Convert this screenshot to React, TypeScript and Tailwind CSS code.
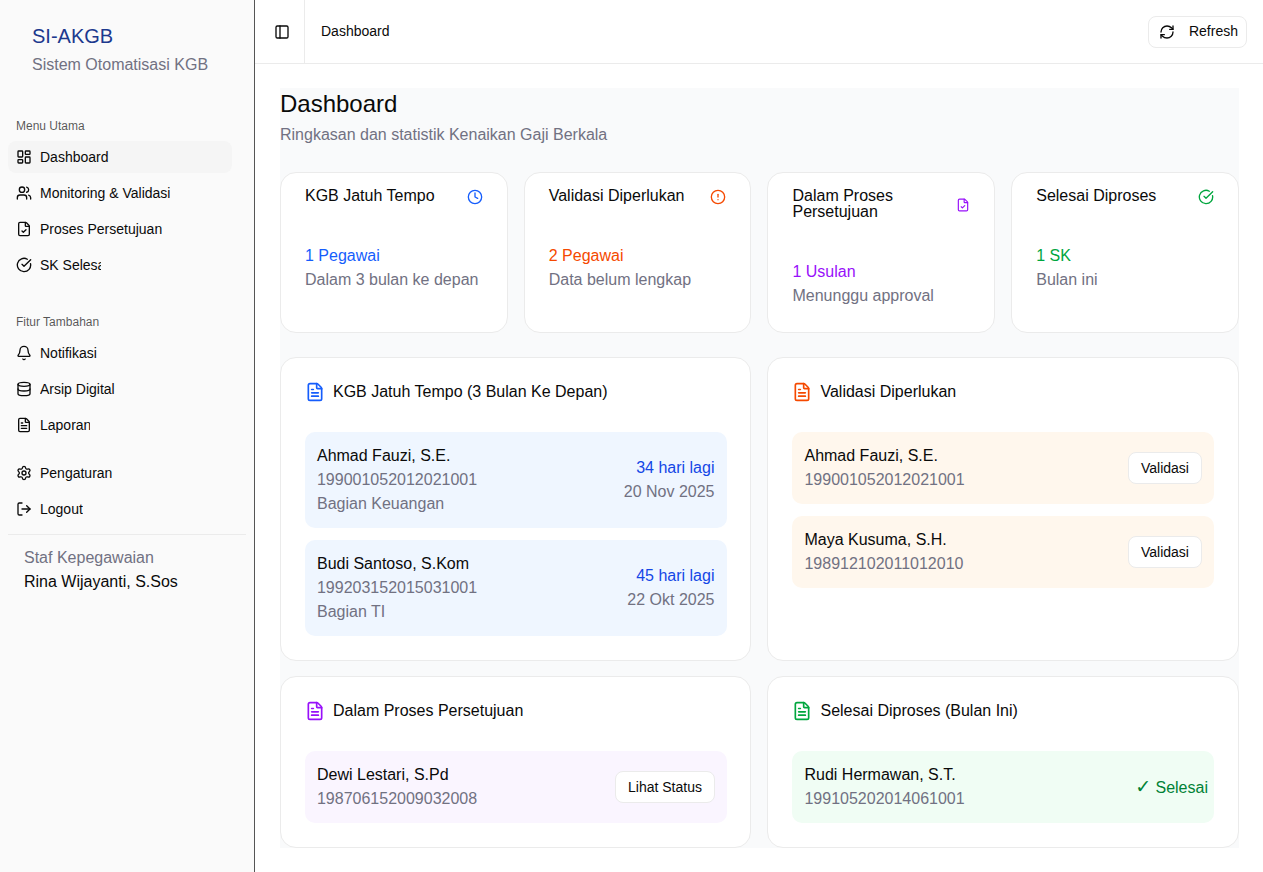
import {
  AlertCircle,
  Bell,
  CircleCheckBig,
  Clock,
  Database,
  FileCheck,
  FileText,
  LayoutDashboard,
  LogOut,
  PanelLeft,
  RefreshCw,
  Settings,
  Users,
  type LucideIcon,
} from "lucide-react";
import type { ReactNode } from "react";

function NavItem({
  icon: Icon,
  label,
  active,
  clip,
}: {
  icon: LucideIcon;
  label: string;
  active?: boolean;
  clip?: string;
}) {
  return (
    <div
      className={`flex h-8 items-center gap-2 rounded-lg px-2 text-sm text-[#0a0a0a] ${active ? "bg-[#f5f5f5]" : ""}`}
    >
      <Icon className="size-4 shrink-0" />
      <span className={`overflow-hidden whitespace-nowrap ${clip ?? ""}`}>{label}</span>
    </div>
  );
}

function StatCard({
  title,
  icon: Icon,
  iconColor,
  iconSize = "size-4",
  value,
  valueColor,
  note,
}: {
  title: string;
  icon: LucideIcon;
  iconColor: string;
  iconSize?: string;
  value: string;
  valueColor: string;
  note: string;
}) {
  return (
    <div className="rounded-2xl border border-[#ebebeb] bg-white px-6 pt-[15px] pb-6">
      <div className="flex items-center justify-between gap-2">
        <h3 className="leading-4 text-[#0a0a0a]">{title}</h3>
        <Icon className={`shrink-0 translate-y-px ${iconSize} ${iconColor}`} />
      </div>
      <div className={`mt-10 ${valueColor}`}>{value}</div>
      <div className="text-[#717182]">{note}</div>
    </div>
  );
}

function Panel({
  title,
  iconColor,
  left,
  children,
}: {
  title: string;
  iconColor: string;
  left?: boolean;
  children: ReactNode;
}) {
  return (
    <div
      className={`rounded-2xl border border-[#ebebeb] bg-white pt-6 pb-6 pl-6 ${left ? "pr-[23.5px]" : "pr-6"}`}
    >
      <div className="flex h-5 items-center gap-2">
        <FileText className={`size-5 shrink-0 ${iconColor}`} />
        <h3 className="leading-4 text-[#0a0a0a]">{title}</h3>
      </div>
      <div className="mt-[30px] flex flex-col gap-3">{children}</div>
    </div>
  );
}

function PersonRow({
  name,
  nip,
  dept,
  bg,
  right,
}: {
  name: string;
  nip: string;
  dept?: string;
  bg: string;
  right: ReactNode;
}) {
  return (
    <div className={`flex items-center justify-between rounded-[10px] p-3 ${bg}`}>
      <div>
        <div className="text-[#0a0a0a]">{name}</div>
        <div className="text-[#717182]">{nip}</div>
        {dept && <div className="text-[#717182]">{dept}</div>}
      </div>
      {right}
    </div>
  );
}

function SmallButton({ label }: { label: string }) {
  return (
    <button className="h-8 rounded-lg border border-[#ebebeb] bg-white px-3 text-sm text-[#0a0a0a]">
      {label}
    </button>
  );
}

function DueDate({ days, date }: { days: string; date: string }) {
  return (
    <div className="pr-[0.5px] text-right">
      <div className="text-[#1447e6]">{days}</div>
      <div className="text-[#717182]">{date}</div>
    </div>
  );
}

export default function App() {
  return (
    <div className="flex h-[872px] overflow-hidden bg-white font-['Liberation_Sans',sans-serif]">
      <aside className="flex w-[255px] shrink-0 flex-col border-r border-[#555555] bg-[#fafafa]">
        <div className="px-8 pt-[22px]">
          <div className="text-xl leading-7 text-[#1c398e]">SI-AKGB</div>
          <div className="mt-[3px] text-[#717182]">Sistem Otomatisasi KGB</div>
        </div>

        <div className="mt-[32px] px-2">
          <div className="flex h-8 items-center px-2 pt-px text-xs text-[#0a0a0a]/70">Menu Utama</div>
          <div className="flex w-[224px] flex-col gap-1">
            <NavItem icon={LayoutDashboard} label="Dashboard" active />
            <NavItem icon={Users} label="Monitoring & Validasi" />
            <NavItem icon={FileCheck} label="Proses Persetujuan" />
            <NavItem icon={CircleCheckBig} label="SK Selesai" clip="w-[61px]" />
          </div>
        </div>

        <div className="mt-[24px] px-2">
          <div className="flex h-8 items-center px-2 pt-px text-xs text-[#0a0a0a]/70">Fitur Tambahan</div>
          <div className="flex w-[224px] flex-col gap-1">
            <NavItem icon={Bell} label="Notifikasi" />
            <NavItem icon={Database} label="Arsip Digital" />
            <NavItem icon={FileText} label="Laporan" clip="w-[50px]" />
          </div>
        </div>

        <div className="mt-[16px] flex w-[240px] flex-col gap-1 px-2">
          <NavItem icon={Settings} label="Pengaturan" />
          <NavItem icon={LogOut} label="Logout" />
        </div>

        <div className="mx-2 mt-[9px] border-t border-[#ebebeb] px-4 pt-[11px]">
          <div className="text-[#717182]">Staf Kepegawaian</div>
          <div className="text-[#0a0a0a]">Rina Wijayanti, S.Sos</div>
        </div>
      </aside>

      <div className="flex min-w-0 flex-1 flex-col">
        <header className="flex h-16 shrink-0 items-center border-b border-[#ebebeb] pr-4">
          <div className="flex h-full w-[50px] items-center border-r border-[#ebebeb] pl-[19px]">
            <PanelLeft className="size-4 text-[#0a0a0a]" />
          </div>
          <span className="ml-4 flex-1 pb-[2px] text-sm text-[#0a0a0a]">Dashboard</span>
          <button className="flex h-8 items-center gap-[14px] rounded-lg border border-[#ebebeb] bg-white pr-2 pl-[10px] text-sm text-[#0a0a0a]">
            <RefreshCw className="size-4" />
            <span className="pb-[2px]">Refresh</span>
          </button>
        </header>

        <main className="pt-6 pl-[24.98px]">
          <div className="w-[959px] bg-[#f9fafb]">
            <h1 className="text-2xl leading-8 text-[#0a0a0a]">Dashboard</h1>
            <p className="mt-[3px] mb-[25px] text-[#717182]">
              Ringkasan dan statistik Kenaikan Gaji Berkala
            </p>

            <div className="grid grid-cols-4 gap-4">
              <StatCard
                title="KGB Jatuh Tempo"
                icon={Clock}
                iconColor="text-[#155dfc]"
                value="1 Pegawai"
                valueColor="text-[#155dfc]"
                note="Dalam 3 bulan ke depan"
              />
              <StatCard
                title="Validasi Diperlukan"
                icon={AlertCircle}
                iconColor="text-[#f54900]"
                value="2 Pegawai"
                valueColor="text-[#f54900]"
                note="Data belum lengkap"
              />
              <StatCard
                title="Dalam Proses Persetujuan"
                icon={FileCheck}
                iconColor="text-[#9810fa]"
                iconSize="h-4 w-[14px]"
                value="1 Usulan"
                valueColor="text-[#9810fa]"
                note="Menunggu approval"
              />
              <StatCard
                title="Selesai Diproses"
                icon={CircleCheckBig}
                iconColor="text-[#00a63e]"
                value="1 SK"
                valueColor="text-[#00a63e]"
                note="Bulan ini"
              />
            </div>

            <div className="mt-6 grid grid-cols-2 gap-4">
              <Panel title="KGB Jatuh Tempo (3 Bulan Ke Depan)" iconColor="text-[#155dfc]" left>
                <PersonRow
                  name="Ahmad Fauzi, S.E."
                  nip="199001052012021001"
                  dept="Bagian Keuangan"
                  bg="bg-[#eff6ff]"
                  right={<DueDate days="34 hari lagi" date="20 Nov 2025" />}
                />
                <PersonRow
                  name="Budi Santoso, S.Kom"
                  nip="199203152015031001"
                  dept="Bagian TI"
                  bg="bg-[#eff6ff]"
                  right={<DueDate days="45 hari lagi" date="22 Okt 2025" />}
                />
              </Panel>
              <Panel title="Validasi Diperlukan" iconColor="text-[#f54900]">
                <PersonRow
                  name="Ahmad Fauzi, S.E."
                  nip="199001052012021001"
                  bg="bg-[#fff7ed]"
                  right={<SmallButton label="Validasi" />}
                />
                <PersonRow
                  name="Maya Kusuma, S.H."
                  nip="198912102011012010"
                  bg="bg-[#fff7ed]"
                  right={<SmallButton label="Validasi" />}
                />
              </Panel>
            </div>

            <div className="mt-[15.4px] grid grid-cols-2 gap-4">
              <Panel title="Dalam Proses Persetujuan" iconColor="text-[#9810fa]" left>
                <PersonRow
                  name="Dewi Lestari, S.Pd"
                  nip="198706152009032008"
                  bg="bg-[#faf5ff]"
                  right={<SmallButton label="Lihat Status" />}
                />
              </Panel>
              <Panel title="Selesai Diproses (Bulan Ini)" iconColor="text-[#00a63e]">
                <PersonRow
                  name="Rudi Hermawan, S.T."
                  nip="199105202014061001"
                  bg="bg-[#f0fdf4]"
                  right={
                    <span className="-mt-[1px] -mr-[6px] text-[#008236]">
                      <span className="font-['DejaVu_Sans',sans-serif] text-[19px] leading-6 font-bold">✓</span> Selesai
                    </span>
                  }
                />
              </Panel>
            </div>
          </div>
        </main>
      </div>
    </div>
  );
}
